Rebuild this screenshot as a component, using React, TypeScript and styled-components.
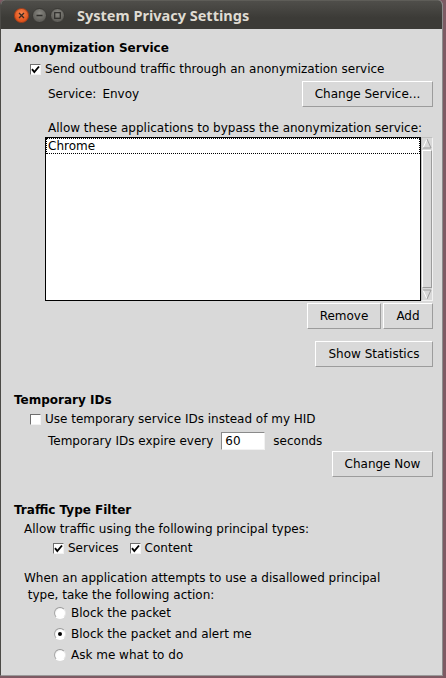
import styled, { createGlobalStyle } from 'styled-components';

const GlobalStyle = createGlobalStyle`
  html, body {
    margin: 0;
    padding: 0;
    background: #7d5a63;
  }
  body {
    width: 446px;
    height: 678px;
    overflow: hidden;
    font-family: "DejaVu Sans", sans-serif;
  }
`;

const Window = styled.div`
  width: 443px;
  height: 676px;
  box-sizing: border-box;
  display: flex;
  flex-direction: column;
  background: #d9d9d9;
  border-left: 1px solid #4b4a46;
  border-right: 1px solid #8c8c8c;
  border-bottom: 1px solid #9a9a9a;
  border-radius: 5px 5px 0 0;
  overflow: hidden;
`;

const TitleBar = styled.div`
  height: 29px;
  flex: none;
  display: flex;
  align-items: center;
  padding-left: 13px;
  gap: 3px;
  background: linear-gradient(#4f4e4a, #3c3b37 60%);
  border-top: 1px solid #5e5d58;
  box-sizing: border-box;
`;

const WinButton = styled.div<{ $close?: boolean }>`
  width: 15px;
  height: 15px;
  border-radius: 50%;
  display: flex;
  align-items: center;
  justify-content: center;
  box-sizing: border-box;
  background: ${p =>
    p.$close
      ? 'radial-gradient(circle at 50% 35%, #f7864f, #e0531c 70%)'
      : 'radial-gradient(circle at 50% 35%, #8a8983, #5f5e59 70%)'};
  border: 1px solid ${p => (p.$close ? '#a9401a' : '#3a3935')};
`;

const Title = styled.div`
  margin-left: 9px;
  color: #dfdbd2;
  font-family: "Noto Sans", "DejaVu Sans", sans-serif;
  font-weight: bold;
  font-size: 14.5px;
`;

const Content = styled.div`
  flex: 1;
  display: flex;
  flex-direction: column;
  padding: 0 9px 0 13px;
  font-size: 12px;
  color: #000;
`;

const Heading = styled.div<{ $top: number }>`
  font-weight: bold;
  line-height: 16px;
  margin-top: ${p => p.$top}px;
`;

const Line = styled.div<{ $left: number; $top: number; $lh?: number }>`
  line-height: ${p => p.$lh ?? 16}px;
  margin-left: ${p => p.$left}px;
  margin-top: ${p => p.$top}px;
  white-space: pre;
`;

const CheckRow = styled.div<{ $left: number; $top: number }>`
  display: flex;
  align-items: center;
  gap: 4px;
  line-height: 16px;
  margin-left: ${p => p.$left}px;
  margin-top: ${p => p.$top}px;
`;

const CheckItem = styled.span`
  display: inline-flex;
  align-items: center;
  gap: 4px;
  margin-right: 7px;
`;

const Box = styled.span`
  width: 11px;
  height: 11px;
  box-sizing: border-box;
  background: #fff;
  border: 1px solid;
  border-color: #6e6e6e #f2f2f2 #f2f2f2 #6e6e6e;
  display: inline-flex;
  align-items: center;
  justify-content: center;
`;

const ServiceRow = styled.div`
  display: flex;
  align-items: center;
  justify-content: space-between;
  margin-left: 34px;
  margin-top: 4px;
  height: 26px;
`;

const Value = styled.span`
  margin-left: 6px;
`;

const Button = styled.button<{ $w: number }>`
  width: ${p => p.$w}px;
  height: 26px;
  padding: 0;
  font-family: "DejaVu Sans", sans-serif;
  font-size: 12px;
  color: #000;
  background: #d9d9d9;
  border: 1px solid;
  border-color: #ffffff #9c9c9c #9c9c9c #ffffff;
  box-sizing: border-box;
`;

const ButtonRow = styled.div<{ $top: number }>`
  display: flex;
  justify-content: flex-end;
  gap: 2px;
  margin-top: ${p => p.$top}px;
`;

const ListRow = styled.div`
  display: flex;
  height: 164px;
  margin-left: 31px;
  margin-top: 1px;
`;

const ListBox = styled.div`
  flex: 1;
  background: #fff;
  border: 1px solid #000;
  box-sizing: border-box;
`;

const ListItem = styled.div`
  height: 16px;
  line-height: 15px;
  padding-left: 1px;
  box-sizing: border-box;
  border: 1px dotted #000;
`;

const ScrollBar = styled.div`
  width: 12px;
  display: flex;
  flex-direction: column;
  background: #d9d9d9;
  border: 1px solid;
  border-color: #c0c0c0 #f2f2f2 #f2f2f2 #c0c0c0;
  box-sizing: border-box;
`;

const Thumb = styled.div`
  flex: 1;
  border: 1px solid;
  border-color: #ffffff #9c9c9c #9c9c9c #ffffff;
  margin: 1px 0;
`;

const ExpireRow = styled.div`
  display: flex;
  align-items: center;
  height: 19px;
  margin-left: 34px;
  margin-top: 4px;
  white-space: pre;
`;

const NumberField = styled.div`
  width: 44px;
  height: 18px;
  box-sizing: border-box;
  margin: 0 8px;
  padding-left: 3px;
  line-height: 16px;
  background: #fff;
  border: 1px solid;
  border-color: #8a8a8a #f2f2f2 #f2f2f2 #8a8a8a;
`;

const RadioList = styled.div`
  display: flex;
  flex-direction: column;
  margin-top: -2px;
`;

const RadioRow = styled.div`
  display: flex;
  align-items: center;
  gap: 5px;
  height: 21px;
  margin-left: 40px;
`;

const Radio = styled.span`
  width: 12px;
  height: 12px;
  border-radius: 50%;
  box-sizing: border-box;
  background: radial-gradient(circle at 60% 65%, #ffffff 55%, #d8d8d8);
  border: 1px solid;
  border-color: #9a9a9a #e8e8e8 #ffffff #a8a8a8;
  display: inline-flex;
  align-items: center;
  justify-content: center;
`;

const Dot = styled.span`
  width: 4px;
  height: 4px;
  border-radius: 50%;
  background: #000;
`;

const Check = () => (
  <svg width="9" height="9" viewBox="0 0 9 9">
    <path d="M1 4.2 L3.3 7 L8 1.5" fill="none" stroke="#000" strokeWidth="1.9" />
  </svg>
);

const CheckBox = ({ on }: { on?: boolean }) => <Box>{on && <Check />}</Box>;

const Arrow = ({ down }: { down?: boolean }) => (
  <svg width="10" height="11" viewBox="0 0 10 11" style={{ display: 'block' }}>
    {down ? (
      <>
        <path d="M1 1 L5 10" stroke="#ffffff" fill="none" />
        <path d="M1 1 L9 1 L5 10" stroke="#9c9c9c" fill="none" />
      </>
    ) : (
      <>
        <path d="M5 1 L1 10" stroke="#ffffff" fill="none" />
        <path d="M5 1 L9 10 L1 10" stroke="#9c9c9c" fill="none" />
      </>
    )}
  </svg>
);

const radios = [
  { label: 'Block the packet', on: false },
  { label: 'Block the packet and alert me', on: true },
  { label: 'Ask me what to do', on: false },
];

export default function App() {
  return (
    <>
      <GlobalStyle />
      <Window>
        <TitleBar>
          <WinButton $close>
            <svg width="7" height="7" viewBox="0 0 7 7">
              <path d="M1 1 L6 6 M6 1 L1 6" stroke="#3a2a22" strokeWidth="1.3" />
            </svg>
          </WinButton>
          <WinButton>
            <svg width="7" height="7" viewBox="0 0 7 7">
              <path d="M0.5 3.5 L6.5 3.5" stroke="#2e2d2a" strokeWidth="1.4" />
            </svg>
          </WinButton>
          <WinButton>
            <svg width="7" height="7" viewBox="0 0 7 7">
              <rect x="0.7" y="0.7" width="5.6" height="5.6" fill="none" stroke="#2e2d2a" strokeWidth="1.2" />
            </svg>
          </WinButton>
          <Title>System Privacy Settings</Title>
        </TitleBar>
        <Content>
          <Heading $top={11}>Anonymization Service</Heading>
          <CheckRow $left={16} $top={5}>
            <CheckBox on />
            Send outbound traffic through an anonymization service
          </CheckRow>
          <ServiceRow>
            <span>
              Service:<Value>Envoy</Value>
            </span>
            <Button $w={131}>Change Service...</Button>
          </ServiceRow>
          <Line $left={34} $top={13}>Allow these applications to bypass the anonymization service:</Line>
          <ListRow>
            <ListBox>
              <ListItem>Chrome</ListItem>
            </ListBox>
            <ScrollBar>
              <Arrow />
              <Thumb />
              <Arrow down />
            </ScrollBar>
          </ListRow>
          <ButtonRow $top={2}>
            <Button $w={74}>Remove</Button>
            <Button $w={50}>Add</Button>
          </ButtonRow>
          <ButtonRow $top={12}>
            <Button $w={118}>Show Statistics</Button>
          </ButtonRow>

          <Heading $top={25}>Temporary IDs</Heading>
          <CheckRow $left={16} $top={3}>
            <CheckBox />
            Use temporary service IDs instead of my HID
          </CheckRow>
          <ExpireRow>
            Temporary IDs expire every
            <NumberField>60</NumberField>
            seconds
          </ExpireRow>
          <ButtonRow $top={1}>
            <Button $w={101}>Change Now</Button>
          </ButtonRow>

          <Heading $top={25}>Traffic Type Filter</Heading>
          <Line $left={10} $top={3}>Allow traffic using the following principal types:</Line>
          <CheckRow $left={39} $top={3}>
            <CheckItem>
              <CheckBox on />
              Services
            </CheckItem>
            <CheckItem>
              <CheckBox on />
              Content
            </CheckItem>
          </CheckRow>
          <Line $left={10} $top={14} $lh={17}>
            {'When an application attempts to use a disallowed principal\n type, take the following action:'}
          </Line>
          <RadioList>
            {radios.map(r => (
              <RadioRow key={r.label}>
                <Radio>{r.on && <Dot />}</Radio>
                {r.label}
              </RadioRow>
            ))}
          </RadioList>
        </Content>
      </Window>
    </>
  );
}
